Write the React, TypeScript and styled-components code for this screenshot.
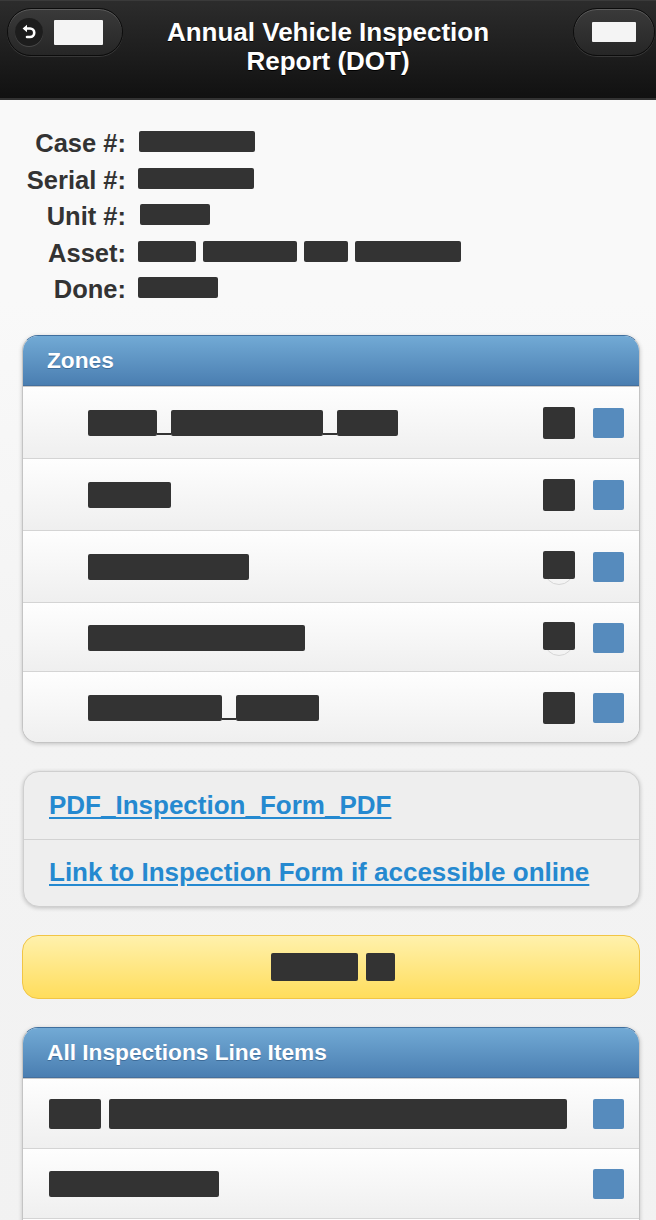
import { Fragment } from "react";
import styled, { createGlobalStyle } from "styled-components";

const GlobalStyle = createGlobalStyle`
    html, body {
        margin: 0;
        padding: 0;
    }
    body {
        font-family: "Liberation Sans", Arial, sans-serif;
        background: #f4f4f4;
    }
`;

const Page = styled.div`
    min-height: 1220px;
    background: linear-gradient(#f9f9f9 0px, #f9f9f9 300px, #f3f3f3 700px, #f2f2f2);
    overflow: hidden;
`;

const Header = styled.header`
    height: 100px;
    box-sizing: border-box;
    display: grid;
    grid-template-columns: 130px 1fr 130px;
    align-items: start;
    background: linear-gradient(#2c2c2c, #111111);
    border-top: 1px solid #3a3a3a;
    border-bottom: 2px solid #333;
`;

const Title = styled.h1`
    margin: 0;
    padding-top: 17px;
    text-align: center;
    color: #fff;
    font-size: 26px;
    line-height: 29px;
    font-weight: bold;
    text-shadow: 0 1px 0 #000;
`;

const PillButton = styled.div<{ $end?: boolean }>`
    margin-top: 7px;
    height: 48px;
    box-sizing: border-box;
    border-radius: 24px;
    border: 1px solid #0c0c0c;
    background: linear-gradient(#3a3a3a, #262626);
    box-shadow: inset 0 1px 0 rgba(255, 255, 255, 0.18), 0 1px 0 rgba(255, 255, 255, 0.12);
    display: flex;
    align-items: center;
    gap: 11px;
    padding-left: ${(p) => (p.$end ? "18px" : "7px")};
    margin-left: ${(p) => (p.$end ? "0" : "7px")};
    width: ${(p) => (p.$end ? "82px" : "116px")};
    justify-self: ${(p) => (p.$end ? "end" : "start")};
    margin-right: 1px;
`;

const IconDisc = styled.span`
    width: 28px;
    height: 28px;
    border-radius: 50%;
    background: #1d1d1d;
    box-shadow: 0 1px 0 rgba(255, 255, 255, 0.15);
    display: flex;
    align-items: center;
    justify-content: center;
`;

const WhiteBlock = styled.span<{ $w: number; $h: number }>`
    display: block;
    width: ${(p) => p.$w}px;
    height: ${(p) => p.$h}px;
    background: #f4f4f4;
    border-radius: 1px;
`;

const Info = styled.section`
    display: grid;
    grid-template-columns: 126px 1fr;
    column-gap: 12px;
    padding: 25px 0 0;
`;

const Label = styled.div`
    text-align: right;
    font-size: 25.5px;
    line-height: 36.5px;
    font-weight: bold;
    color: #333;
`;

const Value = styled.div<{ $shift?: number }>`
    display: flex;
    align-items: center;
    gap: 7px;
    padding-bottom: 3px;
    padding-left: ${(p) => p.$shift ?? 0}px;
`;

const Bar = styled.span<{ $w: number; $h?: number }>`
    display: block;
    flex: none;
    width: ${(p) => p.$w}px;
    height: ${(p) => p.$h ?? 21}px;
    background: #333;
    border-radius: 2px;
`;

const Underscore = styled.span<{ $w: number }>`
    display: block;
    align-self: flex-end;
    width: ${(p) => p.$w}px;
    height: 2px;
    margin-bottom: 1px;
    background: #333;
`;

const Stack = styled.main`
    display: flex;
    flex-direction: column;
    gap: 28px;
    padding: 27px 16px 0 22px;
`;

const Panel = styled.section`
    border-radius: 16px;
    border: 1px solid #c4c4c4;
    border-top-color: #3f6f9e;
    background: #f9f9f9;
    box-shadow: 0 1px 4px rgba(0, 0, 0, 0.2);
    overflow: hidden;
`;

const PanelHead = styled.h2`
    margin: 0;
    height: 50px;
    box-sizing: border-box;
    display: flex;
    align-items: center;
    padding-left: 24px;
    font-size: 22.7px;
    font-weight: bold;
    color: #fff;
    text-shadow: 0 1px 0 #3e6c99;
    background: linear-gradient(#72aad5, #4a7eb1);
    border-bottom: 1px solid #456f9c;
`;

const Row = styled.div<{ $indent: number; $h: number }>`
    height: ${(p) => p.$h}px;
    box-sizing: border-box;
    display: flex;
    align-items: center;
    padding: 2px 15px 0 ${(p) => p.$indent}px;
    background: linear-gradient(#fefefe, #efefef);
    border-top: 1px solid #d4d4d4;
    &:first-of-type {
        border-top: 1px solid #c8c8c8;
    }
`;

const RowName = styled.div<{ $gap?: number }>`
    flex: 1;
    display: flex;
    align-items: center;
    gap: ${(p) => p.$gap ?? 0}px;
`;

const Badge = styled.span<{ $ring?: boolean }>`
    position: relative;
    width: 32px;
    height: 32px;
    flex: none;
    margin-right: 18px;
    &::before {
        content: "";
        display: ${(p) => (p.$ring ? "block" : "none")};
        position: absolute;
        left: 1px;
        top: 4px;
        width: 28px;
        height: 28px;
        border-radius: 50%;
        border: 1px solid #d6d6d6;
    }
    &::after {
        content: "";
        position: absolute;
        inset: ${(p) => (p.$ring ? "0 0 4px 0" : "0")};
        background: #333;
        border-radius: 2px;
    }
`;

const Check = styled.span`
    width: 31px;
    height: 30px;
    flex: none;
    background: #568bbd;
    border-radius: 2px;
`;

const LinkPanel = styled.section`
    margin-left: 1px;
    border-radius: 16px;
    border: 1px solid #cfcfcf;
    background: #eeeeee;
    box-shadow: 0 1px 4px rgba(0, 0, 0, 0.22);
    overflow: hidden;
`;

const LinkRow = styled.div`
    height: 67px;
    box-sizing: border-box;
    display: flex;
    align-items: center;
    padding-left: 25px;
    & + & {
        border-top: 1px solid #d2d2d2;
    }
`;

const Anchor = styled.a`
    color: #2589d0;
    font-weight: bold;
    font-size: 26px;
    text-decoration: underline;
    text-underline-offset: 3px;
`;

const YellowButton = styled.div`
    height: 64px;
    box-sizing: border-box;
    border-radius: 16px;
    border: 1px solid #f1c545;
    background: linear-gradient(#fff1ac, #ffdd5c);
    display: flex;
    align-items: center;
    justify-content: center;
    gap: 8px;
    padding-left: 4px;
`;

const zones = [
    { parts: [69, 152, 61], ring: false, h: 72 },
    { parts: [83], ring: false, h: 72 },
    { parts: [161], ring: true, h: 72 },
    { parts: [217], ring: true, h: 69 },
    { parts: [134, 83], ring: false, h: 71 },
];

const UndoIcon = () => (
    <svg width="18" height="18" viewBox="0 0 18 18">
        <path
            d="M5 5.5 H10 A4.2 4.2 0 0 1 10 14 H7"
            fill="none"
            stroke="#fff"
            strokeWidth="2.6"
            strokeLinecap="round"
        />
        <path d="M7 1.8 L2.6 5.5 L7 9.2 Z" fill="#fff" />
    </svg>
);

// names are hidden behind bars; underscores between words stay visible
const NameBars = ({ parts, h }: { parts: number[]; h: number }) => (
    <RowName>
        {parts.map((w, i) => (
            <Fragment key={i}>
                {i > 0 ? <Underscore $w={14} /> : null}
                <Bar $w={w} $h={h} />
            </Fragment>
        ))}
    </RowName>
);

const App = () => {
    return (
        <Page>
            <GlobalStyle />
            <Header>
                <PillButton>
                    <IconDisc>
                        <UndoIcon />
                    </IconDisc>
                    <WhiteBlock $w={49} $h={25} />
                </PillButton>
                <Title>
                    Annual Vehicle Inspection
                    <br />
                    Report (DOT)
                </Title>
                <PillButton $end>
                    <WhiteBlock $w={44} $h={20} />
                </PillButton>
            </Header>

            <Info>
                <Label>Case #:</Label>
                <Value $shift={1}>
                    <Bar $w={116} />
                </Value>
                <Label>Serial #:</Label>
                <Value>
                    <Bar $w={116} />
                </Value>
                <Label>Unit #:</Label>
                <Value $shift={2}>
                    <Bar $w={70} />
                </Value>
                <Label>Asset:</Label>
                <Value>
                    <Bar $w={58} />
                    <Bar $w={94} />
                    <Bar $w={44} />
                    <Bar $w={106} />
                </Value>
                <Label>Done:</Label>
                <Value>
                    <Bar $w={80} />
                </Value>
            </Info>

            <Stack>
                <Panel>
                    <PanelHead>Zones</PanelHead>
                    {zones.map((z, i) => (
                        <Row key={i} $indent={65} $h={z.h}>
                            <NameBars parts={z.parts} h={26} />
                            <Badge $ring={z.ring} />
                            <Check />
                        </Row>
                    ))}
                </Panel>

                <LinkPanel>
                    <LinkRow>
                        <Anchor href="#">PDF_Inspection_Form_PDF</Anchor>
                    </LinkRow>
                    <LinkRow>
                        <Anchor href="#">Link to Inspection Form if accessible online</Anchor>
                    </LinkRow>
                </LinkPanel>

                <YellowButton>
                    <Bar $w={87} $h={28} />
                    <Bar $w={29} $h={28} />
                </YellowButton>

                <Panel>
                    <PanelHead>All Inspections Line Items</PanelHead>
                    <Row $indent={26} $h={70}>
                        <RowName $gap={8}>
                            <Bar $w={52} $h={30} />
                            <Bar $w={458} $h={30} />
                        </RowName>
                        <Check />
                    </Row>
                    <Row $indent={26} $h={70}>
                        <NameBars parts={[170]} h={26} />
                        <Check />
                    </Row>
                    <Row $indent={26} $h={70}>
                        <NameBars parts={[120]} h={26} />
                        <Check />
                    </Row>
                </Panel>
            </Stack>
        </Page>
    );
};

export default App;
